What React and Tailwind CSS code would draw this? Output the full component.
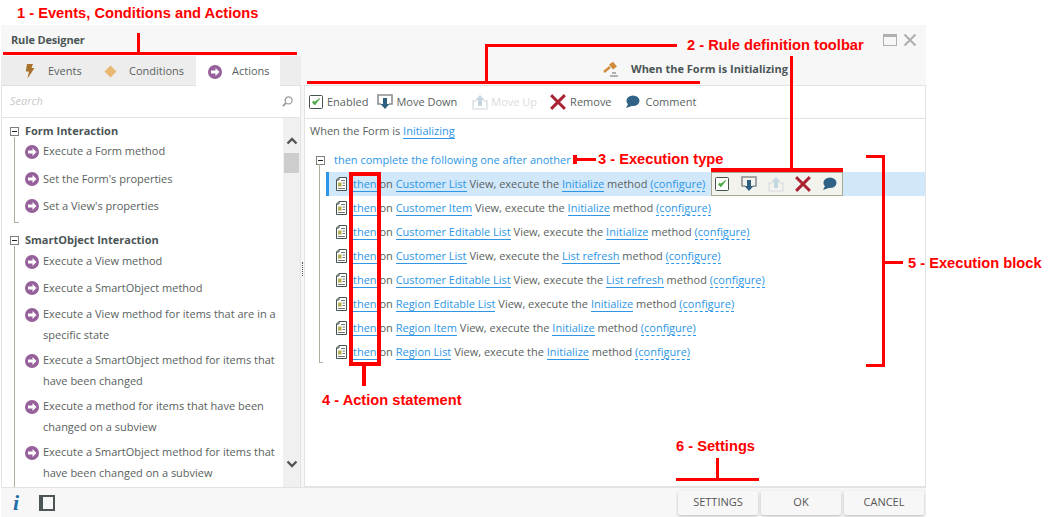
import React from "react";

function ArrowCircle() {
  return (
    <svg viewBox="0 0 14 14" className="w-[14px] h-[14px] shrink-0">
      <circle cx="7" cy="7" r="7" fill="#96609a" />
      <path d="M7.5 3 L11.5 7 L7.5 11 V8.6 H3 V5.4 H7.5 Z" fill="#fff" />
    </svg>
  );
}

function Bolt() {
  return (
    <svg viewBox="0 0 10 15" className="w-[10px] h-[15px]">
      <path d="M2 0 H8 L6.5 4 H9.5 L2.5 14.5 L4 7.5 H0.8 Z" fill="#a8722c" />
    </svg>
  );
}

function Diamond() {
  return (
    <svg viewBox="0 0 14 14" className="w-[13px] h-[13px]">
      <path d="M7 0.5 L13.5 7 L7 13.5 L0.5 7 Z" fill="#e9b873" />
    </svg>
  );
}

function Magnifier() {
  return (
    <svg viewBox="0 0 12 12" className="w-[11px] h-[11px]" fill="none" stroke="#9a9a9a" strokeWidth="1.4">
      <circle cx="7.2" cy="4.8" r="3.8" />
      <path d="M4.4 7.6 L1 11" strokeWidth="2" />
    </svg>
  );
}

function Minus() {
  return (
    <span className="w-[9px] h-[9px] border border-[#7f7f7f] bg-white flex items-center justify-center shrink-0">
      <span className="block w-[5px] h-px bg-[#222]"></span>
    </span>
  );
}

function CheckBox() {
  return (
    <svg viewBox="0 0 14 14" className="w-[14px] h-[14px] shrink-0">
      <rect x="0.5" y="0.5" width="13" height="13" rx="1" fill="#fff" stroke="#44524f" />
      <path d="M3.4 7.2 L5.8 10 L10.8 3.4 L5.8 7 L4.6 6 Z" fill="#4dac44" stroke="#4dac44" strokeWidth="0.8" />
    </svg>
  );
}

function MoveDownIcon() {
  return (
    <svg viewBox="0 0 16 16" className="w-[16px] h-[16px] shrink-0">
      <path d="M4 10 H1 V1 H15 V10 H12" fill="none" stroke="#8a8f90" strokeWidth="1.6" />
      <path d="M6 4 H10 V10 H12.5 L8 15 L3.5 10 H6 Z" fill="#2f5f7f" />
    </svg>
  );
}

function MoveUpIcon() {
  return (
    <svg viewBox="0 0 16 16" className="w-[16px] h-[16px] shrink-0">
      <path d="M4.5 7 H1 V15 H15 V7 H11.5" fill="none" stroke="#dfe3e3" strokeWidth="1.6" />
      <path d="M6 12 H10 V6 H12.5 L8 1 L3.5 6 H6 Z" fill="#c6d6df" />
    </svg>
  );
}

function RemoveIcon() {
  return (
    <svg viewBox="0 0 16 16" className="w-[16px] h-[16px] shrink-0">
      <path d="M2.2 2.2 L13.8 13.8 M13.8 2.2 L2.2 13.8" stroke="#ab2333" strokeWidth="3" strokeLinecap="square" />
    </svg>
  );
}

function CommentIcon() {
  return (
    <svg viewBox="0 0 16 15" className="w-[15px] h-[14px] shrink-0">
      <ellipse cx="8.5" cy="6.2" rx="7" ry="5.7" fill="#2f6286" />
      <path d="M3.5 9 L1 14 L8 11.5 Z" fill="#2f6286" />
    </svg>
  );
}

function DocIcon() {
  return (
    <svg viewBox="0 0 11 14" className="w-[11px] h-[14px] shrink-0">
      <path d="M3 0.5 H10.5 V13.5 H0.5 V3 Z" fill="#fff" stroke="#44524f" />
      <path d="M3 0.5 V3 H0.5" fill="none" stroke="#44524f" />
      <path d="M5 3.5 H9 M2 11.5 H9" stroke="#777" />
      <rect x="2" y="5.5" width="3.5" height="4" fill="#b3b04b" />
      <path d="M6.5 6 H9 M6.5 8.5 H9" stroke="#777" />
    </svg>
  );
}

function Gavel() {
  return (
    <svg viewBox="0 0 16 16" className="w-[16px] h-[16px]">
      <path d="M1 11 L7 6" stroke="#cf8a3c" strokeWidth="2.4" />
      <path d="M6 3.5 L10 0.8 L14 5.5 L10 8.5 Z" fill="#cf8a3c" />
      <path d="M9 12 H13 M7 15 H15" stroke="#9a9a9a" strokeWidth="1.6" />
    </svg>
  );
}

function Link({ children }) {
  return <span className="text-[#2d96e6] border-b border-[#2d96e6] leading-[14px] inline-block">{children}</span>;
}

function Dashed({ children }) {
  return <span className="text-[#2d96e6] border-b border-dashed border-[#2d96e6] leading-[14px] inline-block">{children}</span>;
}

const rules = [
  ["Customer List", "Initialize"],
  ["Customer Item", "Initialize"],
  ["Customer Editable List", "Initialize"],
  ["Customer List", "List refresh"],
  ["Customer Editable List", "List refresh"],
  ["Region Editable List", "Initialize"],
  ["Region Item", "Initialize"],
  ["Region List", "Initialize"],
];

const formItems = [
  ["Execute a Form method"],
  ["Set the Form's properties"],
  ["Set a View's properties"],
];

const smartItems = [
  ["Execute a View method"],
  ["Execute a SmartObject method"],
  ["Execute a View method for items that are in a", "specific state"],
  ["Execute a SmartObject method for items that", "have been changed"],
  ["Execute a method for items that have been", "changed on a subview"],
  ["Execute a SmartObject method for items that", "have been changed on a subview"],
];

function ActionItem({ lines }) {
  return (
    <div className="flex flex-col">
      <div className="flex items-center gap-[4px] h-[21px]">
        <ArrowCircle />
        <span className="whitespace-nowrap">{lines[0]}</span>
      </div>
      {lines[1] && <div className="pl-[18px] h-[20px] leading-[20px] -mb-[0.5px] whitespace-nowrap">{lines[1]}</div>}
    </div>
  );
}

function Group({ title, items, treeClass, listClass }) {
  return (
    <div className="relative">
      <div className="flex items-center gap-[6px] h-[16px] pl-[8px]">
        <Minus />
        <span className="font-bold text-[#4b5556] whitespace-nowrap">{title}</span>
      </div>
      <div className={"absolute left-[12px] top-[14px] w-[5px] border-l border-b border-[#b0b09a] " + treeClass}></div>
      <div className={"pl-[23px] flex flex-col " + listClass}>
        {items.map((lines, i) => (
          <ActionItem key={i} lines={lines} />
        ))}
      </div>
    </div>
  );
}

function RowTools() {
  return (
    <div className="absolute left-[382px] top-0 w-[132px] h-[24px] bg-[#f3f3ee] border border-[#a9a994] flex items-center pl-[3px] gap-[11px]">
      <span className="mr-px flex">
        <CheckBox />
      </span>
      <MoveDownIcon />
      <MoveUpIcon />
      <RemoveIcon />
      <CommentIcon />
    </div>
  );
}

function Btn({ children }) {
  return (
    <button className="w-[80px] h-[24px] bg-[#f7f7f7] rounded-[2px] shadow-[0_1px_3px_rgba(0,0,0,0.25)] text-[11px] text-[#555]">
      {children}
    </button>
  );
}

// red callouts drawn over the dialog
const bars = [
  "left-[3px] top-[52px] w-[294px] h-[3px]",
  "left-[137px] top-[33px] w-[3px] h-[20px]",
  "left-[307px] top-[81px] w-[393px] h-[3px]",
  "left-[485px] top-[44px] w-[3px] h-[38px]",
  "left-[485px] top-[44px] w-[192px] h-[3px]",
  "left-[573px] top-[158px] w-[23px] h-[3px]",
  "left-[573px] top-[155px] w-[4px] h-[9px]",
  "left-[711px] top-[168px] w-[132px] h-[4px]",
  "left-[790px] top-[56px] w-[3px] h-[114px]",
  "left-[866px] top-[155px] w-[19px] h-[3px]",
  "left-[882px] top-[155px] w-[3px] h-[212px]",
  "left-[866px] top-[364px] w-[19px] h-[3px]",
  "left-[885px] top-[261px] w-[18px] h-[3px]",
  "left-[362px] top-[366px] w-[4px] h-[20px]",
  "left-[716px] top-[458px] w-[3px] h-[21px]",
  "left-[676px] top-[478px] w-[83px] h-[3px]",
];

const labels = [
  ["left-[17px] top-[5px]", "1 - Events, Conditions and Actions"],
  ["left-[687px] top-[37px]", "2 - Rule definition toolbar"],
  ["left-[598px] top-[151px]", "3 - Execution type"],
  ["left-[322px] top-[392px]", "4 - Action statement"],
  ["left-[908px] top-[255px]", "5 - Execution block"],
  ["left-[676px] top-[438px]", "6 - Settings"],
];

export default function App() {
  return (
    <div className="relative w-[1052px] h-[517px] bg-white overflow-hidden font-['Open_Sans',sans-serif] text-[11px] text-[#5a5f60]">
      <div className="ml-[1px] mt-[25px] w-[925px] h-[492px] bg-[#f7f7f7] flex flex-col">
        {/* ================= BODY ================= */}
        <div className="flex flex-1 min-h-0">
          {/* left panel */}
          <div className="w-[300px] flex flex-col shrink-0">
            <div className="h-[31px] pl-[10px] pt-[7px] text-[11px] font-bold text-[#4b5556] tracking-[-0.15px]">Rule Designer</div>
            <div className="flex h-[30px] bg-[#ededed] border-b border-[#e0e0e0] pt-px">
              <div className="flex items-center gap-[13px] pl-[24px] w-[90px]">
                <Bolt />
                <span>Events</span>
              </div>
              <div className="flex items-center gap-[12px] pl-[13px] w-[105px]">
                <Diamond />
                <span>Conditions</span>
              </div>
              <div className="flex items-center gap-[10px] pl-[12px] bg-white w-[84px] h-[30px] -mt-px pt-px">
                <ArrowCircle />
                <span>Actions</span>
              </div>
            </div>
            <div className="flex-1 min-h-0 bg-white border-x border-[#e3e3e3] flex flex-col">
              <div className="h-[32px] shrink-0 border-b border-[#e3e3e3] flex items-center justify-between pl-[8px] pr-[7px]">
                <span className="italic text-[#c9c9c9]">Search</span>
                <Magnifier />
              </div>
              <div className="flex flex-1 min-h-0">
                <div className="flex-1 min-w-0 overflow-hidden pt-[5px] flex flex-col gap-[15.5px]">
                  <Group title="Form Interaction" items={formItems} treeClass="h-[86px]" listClass="pt-[2px] gap-[6.25px]" />
                  <Group title="SmartObject Interaction" items={smartItems} treeClass="h-[300px]" listClass="pt-[3px] gap-[5.5px]" />
                </div>
                <div className="w-[17px] shrink-0 bg-[#f0f0f0] flex flex-col items-center relative">
                  <svg viewBox="0 0 12 8" className="w-[12px] h-[8px] mt-[19px]">
                    <path d="M1.5 6.5 L6 2 L10.5 6.5" fill="none" stroke="#555" strokeWidth="2.4" />
                  </svg>
                  <div className="w-[15px] h-[20px] bg-[#cdcdcd] mt-[8px]"></div>
                  <svg viewBox="0 0 12 8" className="w-[12px] h-[8px] absolute bottom-[19px]">
                    <path d="M1.5 1.5 L6 6 L10.5 1.5" fill="none" stroke="#555" strokeWidth="2.4" />
                  </svg>
                </div>
              </div>
            </div>
          </div>

          {/* splitter */}
          <div className="w-[3px] shrink-0 flex items-center justify-center">
            <div className="w-px h-[14px] border-l border-dotted border-[#555] mt-[26px]"></div>
          </div>

          {/* right panel */}
          <div className="flex-1 min-w-0 flex flex-col">
            <div className="h-[60px] relative shrink-0">
              <div className="absolute right-[9px] top-[8px] flex items-center gap-[6px]">
                <span className="block w-[14px] h-[12px] border border-[#b0b0b0] border-t-[3px]"></span>
                <svg viewBox="0 0 14 14" className="w-[14px] h-[14px]">
                  <path d="M1.5 1.5 L12.5 12.5 M12.5 1.5 L1.5 12.5" stroke="#b0b0b0" strokeWidth="2.2" />
                </svg>
              </div>
              <div className="absolute left-[299px] top-[36px] flex items-center gap-[12px]">
                <Gavel />
                <span className="font-bold text-[#4b5556] whitespace-nowrap">When the Form is Initializing</span>
              </div>
            </div>
            <div className="flex-1 min-h-0 bg-white border border-[#e3e3e3] flex flex-col">
              <div className="h-[33px] shrink-0 border-b border-[#e3e3e3] flex items-center pl-[4px]">
                <div className="flex items-center gap-[4px]">
                  <CheckBox />
                  <span>Enabled</span>
                </div>
                <div className="flex items-center gap-[3px] ml-[9px]">
                  <MoveDownIcon />
                  <span>Move Down</span>
                </div>
                <div className="flex items-center gap-[3px] ml-[15px] text-[#dcdcdc]">
                  <MoveUpIcon />
                  <span>Move Up</span>
                </div>
                <div className="flex items-center gap-[4px] ml-[13px]">
                  <RemoveIcon />
                  <span>Remove</span>
                </div>
                <div className="flex items-center gap-[6px] ml-[13px]">
                  <CommentIcon />
                  <span>Comment</span>
                </div>
              </div>
              <div className="pl-[5px] pt-[4px] h-[26px] whitespace-nowrap">
                When the Form is <Link>Initializing</Link>
              </div>
              <div className="pl-[11px] mt-[6px] flex items-center gap-[9px] h-[18px]">
                <Minus />
                <span className="text-[#2d96e6] whitespace-nowrap">then complete the following one after another</span>
              </div>
              <div className="relative mt-[3px] ml-[21px]">
                <div className="absolute left-[-7px] top-[-8px] w-[4px] h-[199px] border-l border-b border-[#b0b09a]"></div>
                {rules.map(([view, method], i) => (
                  <div
                    key={i}
                    className={
                      i === 0
                        ? "relative h-[24px] flex items-center pl-[7px] gap-[6px] whitespace-nowrap bg-[#d1e8fb] border-l-[3px] border-[#2d96e6]"
                        : "relative h-[24px] flex items-center pl-[10px] gap-[6px] whitespace-nowrap"
                    }
                  >
                    <DocIcon />
                    <span>
                      <Link>then</Link> on <Link>{view}</Link> View, execute the <Link>{method}</Link> method{" "}
                      <Dashed>(configure)</Dashed>
                    </span>
                    {i === 0 && <RowTools />}
                  </div>
                ))}
              </div>
            </div>
          </div>
        </div>

        {/* ================= FOOTER ================= */}
        <div className="h-[30px] shrink-0 flex items-center pl-[12px] pr-[2px] border-t border-[#e3e3e3]">
          <span className="font-['Liberation_Serif',serif] italic font-bold text-[22px] leading-none text-[#1f6fa5]">i</span>
          <span className="block w-[16px] h-[16px] border-2 border-[#4b5556] border-l-[4px] ml-[20px]"></span>
          <div className="ml-auto flex gap-[3px]">
            <Btn>SETTINGS</Btn>
            <Btn>OK</Btn>
            <Btn>CANCEL</Btn>
          </div>
        </div>
      </div>

      {/* ================= CALLOUTS ================= */}
      {bars.map((c, i) => (
        <div key={i} className={"absolute bg-[#ff0000] " + c}></div>
      ))}
      <div className="absolute left-[349px] top-[172px] w-[32px] h-[194px] border-4 border-[#ff0000]"></div>
      {labels.map(([c, text], i) => (
        <div key={i} className={"absolute font-['Liberation_Sans',sans-serif] font-bold text-[14.67px] leading-[16px] text-[#ff0000] whitespace-nowrap " + c}>
          {text}
        </div>
      ))}
    </div>
  );
}
